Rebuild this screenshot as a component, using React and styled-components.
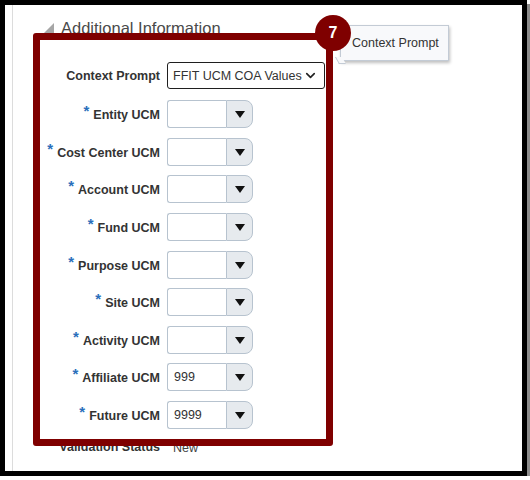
import styled, { createGlobalStyle } from "styled-components";
import { ChevronDown } from "lucide-react";

const GlobalStyle = createGlobalStyle`
  html, body {
    margin: 0;
    padding: 0;
    background: #ffffff;
  }
  body {
    font-family: "Liberation Sans", Arial, sans-serif;
    color: #333333;
  }
`;

const fields = [
  { label: "Entity UCM", value: "" },
  { label: "Cost Center UCM", value: "" },
  { label: "Account UCM", value: "" },
  { label: "Fund UCM", value: "" },
  { label: "Purpose UCM", value: "" },
  { label: "Site UCM", value: "" },
  { label: "Activity UCM", value: "" },
  { label: "Affiliate UCM", value: "999" },
  { label: "Future UCM", value: "9999" },
];

export default function App() {
  return (
    <>
      <GlobalStyle />
      <Frame>
        <Panel>
          <Header>
            <Disclosure />
            <HeaderTitle>Additional Information</HeaderTitle>
          </Header>

          <Form>
            <Label>Context Prompt</Label>
            <Select>
              <span>FFIT UCM COA Values</span>
              <ChevronDown size={15} strokeWidth={2.6} color="#222" />
            </Select>

            {fields.map((f) => (
              <Row key={f.label}>
                <Label>
                  <Required>*</Required>
                  {f.label}
                </Label>
                <Combo>
                  <ComboInput>{f.value}</ComboInput>
                  <ComboButton>
                    <DownArrow />
                  </ComboButton>
                </Combo>
              </Row>
            ))}
          </Form>

          <StatusRow>
            <Label>Validation Status</Label>
            <StatusValue>New</StatusValue>
          </StatusRow>
        </Panel>

        <Highlight />
        <Tooltip>
          Context Prompt
          <TooltipTail />
        </Tooltip>
        <Badge>7</Badge>
      </Frame>
    </>
  );
}

const Frame = styled.div`
  position: relative;
  box-sizing: border-box;
  width: 527px;
  height: 476px;
  border: 5px solid #000000;
  box-shadow: 3px 4px 0 #8c8c8c;
  background: #ffffff;
`;

const Panel = styled.div`
  margin-left: 7px;
  height: 100%;
  border-left: 1px solid #dcdcdc;
  padding-top: 13px;
  box-sizing: border-box;
`;

const Header = styled.div`
  display: flex;
  align-items: center;
  padding-left: 30px;
  height: 20px;
`;

const Disclosure = styled.div`
  width: 0;
  height: 0;
  border-left: 11px solid transparent;
  border-bottom: 11px solid #a6a6a6;
  margin-top: 1px;
  margin-right: 7px;
`;

const HeaderTitle = styled.div`
  font-size: 16.5px;
  line-height: 20px;
  color: #4a4a4a;
`;

const Form = styled.div`
  display: grid;
  grid-template-columns: 147px auto;
  column-gap: 7px;
  row-gap: 9.625px;
  align-items: center;
  margin-top: 24px;
`;

const Row = styled.div`
  display: contents;
`;

const Label = styled.div`
  text-align: right;
  font-size: 12.5px;
  font-weight: 700;
  color: #333333;
  white-space: nowrap;
  margin-top: -1px;
`;

const Required = styled.span`
  color: #2a6fbb;
  font-size: 15px;
  position: relative;
  top: -3px;
  margin-right: 4px;
`;

const Select = styled.div`
  box-sizing: border-box;
  width: 158px;
  height: 27px;
  margin-bottom: 1.4px;
  border: 1px solid #1f1f1f;
  border-radius: 3px;
  display: flex;
  align-items: center;
  justify-content: space-between;
  padding: 0 6px 0 5px;
  font-size: 12.5px;
  color: #333333;
  background: #ffffff;
`;

const Combo = styled.div`
  display: flex;
  height: 28px;
  width: 86px;
`;

const ComboInput = styled.div`
  box-sizing: border-box;
  width: 59px;
  height: 100%;
  border: 1px solid #b7c3cf;
  border-right: none;
  border-radius: 3px 0 0 3px;
  background: #ffffff;
  font-size: 12.5px;
  line-height: 26px;
  padding-left: 6px;
  color: #333333;
`;

const ComboButton = styled.div`
  box-sizing: border-box;
  width: 27px;
  height: 100%;
  border: 1px solid #b7c3cf;
  border-radius: 0 8px 8px 0;
  background: #e6eaee;
  display: flex;
  align-items: center;
  justify-content: center;
`;

const DownArrow = styled.div`
  width: 0;
  height: 0;
  border-left: 5px solid transparent;
  border-right: 5px solid transparent;
  border-top: 7px solid #111111;
  margin-top: 1px;
`;

const StatusRow = styled.div`
  display: grid;
  grid-template-columns: 147px auto;
  column-gap: 7px;
  margin-top: 11px;
  line-height: 16px;
`;

const StatusValue = styled.div`
  font-size: 12.5px;
  color: #444444;
  padding-left: 6px;
`;

const Highlight = styled.div`
  position: absolute;
  left: 28px;
  top: 28px;
  width: 300px;
  height: 413px;
  box-sizing: border-box;
  border: 7px solid #7f0000;
  border-radius: 3px;
`;

const Badge = styled.div`
  position: absolute;
  left: 310px;
  top: 10px;
  width: 36px;
  height: 36px;
  border-radius: 50%;
  background: #7f0000;
  color: #ffffff;
  font-size: 16px;
  font-weight: 700;
  display: flex;
  align-items: center;
  justify-content: center;
`;

const Tooltip = styled.div`
  position: absolute;
  left: 335px;
  top: 20px;
  width: 109px;
  height: 36px;
  box-sizing: border-box;
  border: 1px solid #c3cbd5;
  background: #f8f9fb;
  box-shadow: 1px 2px 3px rgba(0, 0, 0, 0.25);
  font-size: 12.5px;
  color: #333333;
  display: flex;
  align-items: center;
  padding-left: 11px;
`;

const TooltipTail = styled.div`
  position: absolute;
  left: -4px;
  bottom: -4px;
  width: 6px;
  height: 6px;
  background: #f8f9fb;
  border-left: 1px solid #c3cbd5;
  border-bottom: 1px solid #c3cbd5;
  transform: skewX(30deg);
`;
